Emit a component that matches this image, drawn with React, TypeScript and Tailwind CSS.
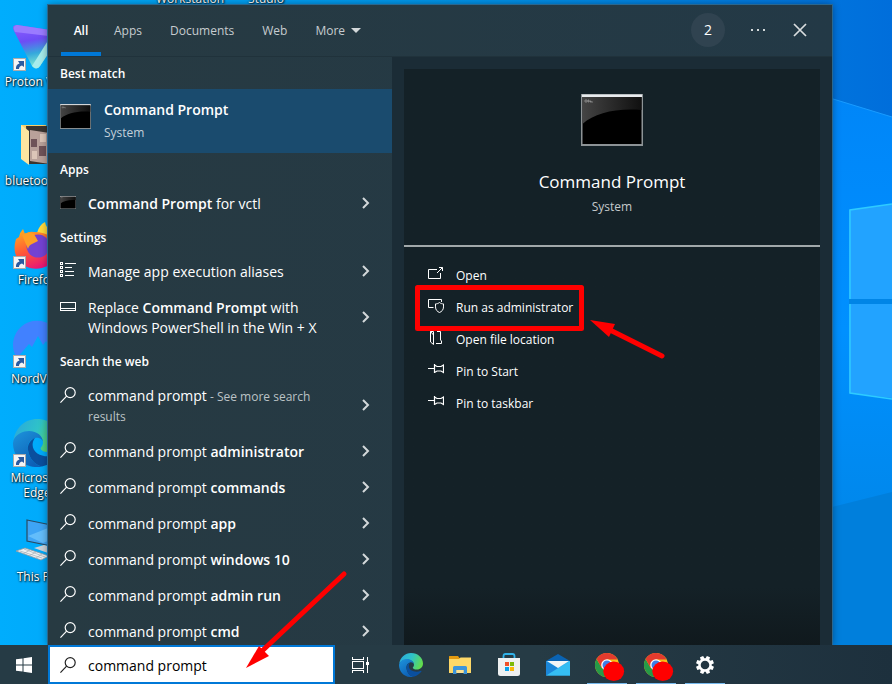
import React from "react";

type Part = { text: string; bold?: boolean };

const textShadow = "[text-shadow:1px_1px_2px_#000,0_0_2px_#000]";

/* ---------- small line icons ---------- */

function SearchIcon() {
  return (
    <svg className="shrink-0" width="16" height="16" viewBox="0 0 16 16" fill="none" stroke="currentColor" strokeWidth="1.2">
      <circle cx="10.2" cy="5.6" r="5" />
      <path d="M6.6 9.2L0.4 15.6" />
    </svg>
  );
}

function ChevronIcon() {
  return (
    <svg width="8" height="12" viewBox="0 0 8 12" fill="none" stroke="#d3d8da" strokeWidth="2">
      <path d="M1 1l5 5-5 5" />
    </svg>
  );
}

function ListIcon() {
  return (
    <svg width="16" height="16" viewBox="0 0 16 16" fill="none" stroke="#fff" shapeRendering="crispEdges">
      <path d="M0.5 0.5h2v2h-2zM0.5 4.5h2v2h-2zM0.5 8.5h2v2h-2zM0.5 12.5h2v2h-2z" />
      <path d="M5 1.5h11M5 5.5h7M5 9.5h9M5 13.5h9" />
    </svg>
  );
}

function TaskbarSettingIcon() {
  return (
    <svg width="16" height="16" viewBox="0 0 16 16" fill="none" stroke="#fff" shapeRendering="crispEdges">
      <path d="M0.5 3.5h15v8h-15zM0.5 9.5h15" />
    </svg>
  );
}

function ConsoleIcon({ width, height }: { width: number; height: number }) {
  return (
    <svg width={width} height={height} viewBox="0 0 62 52" preserveAspectRatio="none">
      <defs>
        <linearGradient id="gloss" x1="0" x2="1">
          <stop offset="0" stopColor="#444" />
          <stop offset="1" stopColor="#101010" />
        </linearGradient>
      </defs>
      <rect width="62" height="52" fill="#8d9396" />
      <rect x="1" y="0.5" width="60" height="2.5" fill="#e8ebee" />
      <rect x="1.5" y="3" width="59" height="47" fill="#000" />
      <path d="M1.500 3h59v13C35 14 14 19 1.500 30z" fill="url(#gloss)" />
      <path d="M4 6h2v2H4zM7 6h1v2H7zM9 7h1v1H9zM10 8h2" stroke="#aaa" strokeWidth="0.6" fill="none" />
    </svg>
  );
}

/* ---------- action icons ---------- */

function OpenIcon() {
  return (
    <svg width="16" height="16" viewBox="0 0 16 16" fill="none" stroke="#fff">
      <path d="M9 3.500H0.500v9h12V7M9 7l5.500-5.500M11 1.500h3.500V5" />
    </svg>
  );
}

function AdminIcon() {
  return (
    <svg width="16" height="16" viewBox="0 0 16 16" fill="none" stroke="#fff">
      <path d="M5.500 9.500h-5v-8h13V4" />
      <path d="M11.500 4.500c-1.200 1-2.600 1.400-4 1.400v3c0 3 1.800 4.700 4 5.600 2.200-.9 4-2.600 4-5.600v-3c-1.400 0-2.800-.4-4-1.400z" />
    </svg>
  );
}

function FolderLocationIcon() {
  return (
    <svg width="16" height="16" viewBox="0 0 16 16" fill="none" stroke="#fff">
      <path d="M2.500 1.500v10.500l3 2.500V5L2.500 1.500zM2.500 1.500h3v10M8 13.500h5.500V11l-1-1V1.500H9" />
    </svg>
  );
}

function PinIcon() {
  return (
    <svg width="16" height="16" viewBox="0 0 16 16" fill="none" stroke="#fff" strokeWidth="1.200">
      <path d="M0 6.500h6M6.500 2v9M6.500 3l2.500 1.500h4l2.500-1.500v7.500L13 9H9l-2.500 1.500" />
    </svg>
  );
}

/* ---------- brand icons ---------- */

function EdgeIcon({ size, id }: { size: number; id: string }) {
  return (
    <svg width={size} height={size} viewBox="0 0 24 24">
      <defs>
        <linearGradient id={id + "a"} x1="0" x2="1" y1="0.2" y2="0.5">
          <stop offset="0" stopColor="#2aa9dc" />
          <stop offset="0.5" stopColor="#2fc3c8" />
          <stop offset="1" stopColor="#63dc4c" />
        </linearGradient>
        <linearGradient id={id + "b"} x1="0" x2="0.6" y1="0" y2="1">
          <stop offset="0" stopColor="#1d94dc" />
          <stop offset="1" stopColor="#0d5fb5" />
        </linearGradient>
      </defs>
      <path d="M0.300 10.500C1.200 4.300 6.200 0 12 0c7 0 12 5 12 10.500 0 3.600-2.700 6-6 6-2.700 0-4.200-1-4.200-1.800 0-.7 1.200-1.200 1.200-3 0-2.800-3-4.900-7-4.900-3.400 0-6 1.400-7.700 3.700z" fill={`url(#${id}a)`} />
      <path d="M0.300 10.500C1.700 7.400 5 6 8 6c4 0 7 2.600 7 5.700 0-1.500-2-2.800-4-2.200-2.600.8-4 3.200-3.500 6C8.200 20 11 23 14.500 23.700 6.500 25.500 0 19.500 0 12z" fill={`url(#${id}b)`} />
      <path d="M11 9.500c-2.400 1-3.900 3.300-3.500 6 .7 4.500 3.500 7.500 7 8.200 3.300-.7 6-2.500 7.900-5.200.4-.6-.1-1-.7-.7-4.900 2.200-11.800.2-11.900-4.800 0-1.300.4-2.500 1.200-3.500z" fill="#0a4f9e" />
    </svg>
  );
}

function ChromeIcon() {
  return (
    <svg className="shrink-0" width="36" height="33" viewBox="-6 -5 36 33">
      <circle cx="12" cy="12" r="12" fill="#fbc116" />
      <path d="M1.600 6A12 12 0 0 0 12 24l5.200-9H6.800z" fill="#269a47" />
      <path d="M1.600 6l5.200 9L12 6.500h10.600A12 12 0 0 0 1.600 6z" fill="#e33b2e" />
      <circle cx="12" cy="12" r="5.800" fill="#fff" />
      <circle cx="12" cy="12" r="4.500" fill="#3d7fe8" />
      <ellipse cx="18.700" cy="18.300" rx="10.400" ry="9.700" fill="#f00" />
    </svg>
  );
}

function ExplorerIcon() {
  return (
    <svg width="22" height="20" viewBox="0 0 22 20">
      <path d="M0 1.500Q0 1 .5 1H9l1.500 2H22v15H0z" fill="#e39a10" />
      <path d="M0 4h10l1.500-1.500H22V18H0z" fill="#fdd868" />
      <path d="M4 19v-6.500Q4 11 5.500 11h11q1.500 0 1.500 1.500V19h-3.500v-4h-7v4z" fill="#3b94db" />
      <path d="M7.500 15h7v3h-7z" fill="#fce193" />
    </svg>
  );
}

function StoreIcon() {
  return (
    <svg width="24" height="24" viewBox="0 0 24 24">
      <path d="M6.500 6V3Q6.500 1 8.500 1h7q2 0 2 2v3" fill="none" stroke="#31b3ea" strokeWidth="1.800" />
      <path d="M1 5h22v15.500q0 2.500-2.500 2.500h-17Q1 23 1 20.500z" fill="#eef0f1" />
      <path d="M8 9h4v4H8z" fill="#ee4f28" />
      <path d="M13 9h4v4h-4z" fill="#7db90a" />
      <path d="M8 14h4v4H8z" fill="#08a1ea" />
      <path d="M13 14h4v4h-4z" fill="#fbb70c" />
    </svg>
  );
}

function MailIcon() {
  return (
    <svg width="24" height="24" viewBox="0 0 24 24">
      <path d="M0 8l12-7 12 7z" fill="#0a63b2" />
      <path d="M0 8h24v14.500H0z" fill="#2da5e8" />
      <path d="M24 8L0 22.500h24z" fill="#35bdf2" />
      <path d="M12 15L0 8v14.500z" fill="#1b86d8" />
      <path d="M1 8h22l-11 7z" fill="#f3f5f6" />
    </svg>
  );
}

function GearIcon() {
  const teeth = [0, 45, 90, 135, 180, 225, 270, 315];
  return (
    <svg width="20" height="20" viewBox="0 0 20 20" fill="#fff">
      {teeth.map((a) => (
        <path key={a} d="M7.900 4.500L8.300 1h3.400l.4 3.500z" transform={`rotate(${a + 22.5} 10 10)`} />
      ))}
      <circle cx="10" cy="10" r="5.500" fill="none" stroke="#fff" strokeWidth="2.400" />
    </svg>
  );
}

function TaskViewIcon() {
  return (
    <svg width="17" height="16" viewBox="0 0 17 16" fill="none" stroke="#fff" shapeRendering="crispEdges">
      <path d="M0.500 0v2.500h11V0M0.500 4.500h11v7h-11zM0.500 16v-2.500h11V16M15.500 0v5M15.500 8v8" />
      <path d="M14 5h3v3h-3z" fill="#fff" stroke="none" />
    </svg>
  );
}

/* ---------- desktop ---------- */

function ProtonIcon() {
  return (
    <svg width="48" height="48" viewBox="0 0 48 48">
      <defs>
        <linearGradient id="pr" x1="0.300" x2="0.500" y1="0" y2="1">
          <stop offset="0" stopColor="#8a5cff" />
          <stop offset="0.350" stopColor="#6d4df5" />
          <stop offset="0.650" stopColor="#35a9dc" />
          <stop offset="1" stopColor="#8ff5d0" />
        </linearGradient>
      </defs>
      <path d="M4 2L44 8q5 1 3 5L27 43q-4 5-8 0L1 8Q-2 2 4 2z" fill="url(#pr)" />
      <path d="M4 2L44 8v6L2 9Q-1 3 4 2z" fill="#9a7bff" />
      <path d="M22 45q3 1 5-2l20-30v-3L36 16 19 43z" fill="#a6ecec" />
    </svg>
  );
}

function PhotoFolderIcon() {
  return (
    <svg width="48" height="48" viewBox="0 0 48 48">
      <path d="M8 3h25v36H16L8 35z" fill="#f5cf6c" />
      <path d="M13 4h30v38H16z" fill="#3b3430" />
      <path d="M17 8l26 4v31L17 39z" fill="#b9a19a" />
      <path d="M18 17h6v8h-6zM26 24h7v10h-7z" fill="#6f5358" />
      <path d="M27 12h6v8h-6zM19 29h5v8h-5z" fill="#dcc5b8" />
      <path d="M8 3l8 6v34l-8-6z" fill="#fde5a0" />
    </svg>
  );
}

function FirefoxIcon() {
  return (
    <svg width="48" height="48" viewBox="0 0 48 48">
      <defs>
        <linearGradient id="ff" x1="0.200" x2="0.600" y1="0" y2="1">
          <stop offset="0" stopColor="#ffab1e" />
          <stop offset="0.500" stopColor="#ff5a36" />
          <stop offset="1" stopColor="#e6127a" />
        </linearGradient>
      </defs>
      <path d="M24 12Q26 4 32 1q1 7 9 12 7 9 3 20z" fill="#ffd93b" />
      <path d="M6 16q1-5 4-8l2 5q4-3 9-2 10 0 18 5l5 12q0 15-15 19-14 3-23-7-7-9-3-22z" fill="url(#ff)" />
      <circle cx="25" cy="25" r="11.500" fill="#7442d2" />
      <path d="M9 14q6-4 12-1l4 7-6 3q-3 1-4 5z" fill="#ff9f25" />
    </svg>
  );
}

function NordIcon() {
  return (
    <svg width="48" height="48" viewBox="0 0 48 48">
      <path d="M4 38A24 24 0 1 1 44 38L33 21l-3 4-5-9-6 11-3-3z" fill="#4181ff" />
    </svg>
  );
}

function ThisPcIcon() {
  return (
    <svg width="48" height="48" viewBox="0 0 48 48">
      <path d="M14 2l34 7v21L14 23z" fill="#3ea4f5" stroke="#294b63" strokeWidth="1.200" />
      <path d="M15 18L40 8l7 2v8L30 25z" fill="#63bdfb" />
      <path d="M21 30l10-3 14 4-10 4z" fill="#ccd3d9" />
      <path d="M3 33l9-3 24 8-8 4z" fill="#eef1f3" stroke="#8f9aa3" strokeWidth="0.800" />
      <path d="M7 33l22 7M11 31l21 8M10 36l7-4M16 38l7-4M23 40l6-4" stroke="#a5afb6" strokeWidth="0.700" />
    </svg>
  );
}

function ShortcutBadge() {
  return (
    <svg className="absolute bottom-0 left-0" width="13" height="13" viewBox="0 0 13 13">
      <rect x="0.500" y="0.500" width="12" height="12" fill="#f5f5f5" stroke="#ababab" />
      <path d="M3 11Q2.500 6.500 6.500 5.500L5 3h6v6L9 7.500Q6 8 6 11z" fill="#2a5aa0" />
    </svg>
  );
}

const shortcuts = [
  { label: "Proton VPN", icon: <ProtonIcon />, linked: true },
  { label: "bluetooth...", icon: <PhotoFolderIcon />, linked: false },
  { label: "Firefox", icon: <FirefoxIcon />, linked: true },
  { label: "NordVPN", icon: <NordIcon />, linked: true },
  { label: "Microsoft Edge", icon: <EdgeIcon size={48} id="desk" />, linked: true },
  { label: "This PC", icon: <ThisPcIcon />, linked: false },
];

function DesktopIcons() {
  return (
    <div className="w-12 shrink-0 pt-[18px]">
      {shortcuts.map((s) => (
        <button key={s.label} className="flex h-[99px] w-[74px] flex-col items-center">
          <span className="relative block h-12 w-12">
            {s.icon}
            {s.linked && <ShortcutBadge />}
          </span>
          <span className={`mt-[3px] flex w-16 justify-center text-center text-xs leading-[15px] text-white ${s.label === "Microsoft Edge" ? "" : "whitespace-nowrap"} ${textShadow}`}>
            {s.label}
          </span>
        </button>
      ))}
    </div>
  );
}

function Wallpaper() {
  return (
    <svg className="absolute inset-0 h-full w-full" viewBox="0 0 892 684" preserveAspectRatio="none">
      <defs>
        <linearGradient id="sky" x1="0" x2="1">
          <stop offset="0" stopColor="#00adfd" />
          <stop offset="0.500" stopColor="#0095ea" />
          <stop offset="1" stopColor="#006edb" />
        </linearGradient>
        <linearGradient id="side" x1="0" x2="0" y1="0" y2="1">
          <stop offset="0" stopColor="#0086f8" />
          <stop offset="0.400" stopColor="#0090ff" />
          <stop offset="0.700" stopColor="#0088ec" />
          <stop offset="1" stopColor="#007edc" />
        </linearGradient>
      </defs>
      <rect width="892" height="684" fill="url(#sky)" />
      <path d="M820 95l72 22v567h-72z" fill="url(#side)" />
      <path d="M820 510l72-18v192h-72z" fill="#007fdc" />
      <path d="M820 95l72 22" stroke="#199cff" />
      <path d="M849 210l43-6v95h-43zM849 304h43v94l-43-5z" fill="#22a3ff" />
      <path d="M849 299h43v5h-43z" fill="#0085e6" />
      <path d="M892 204l-42 6v89M850 304v89l42 6" fill="none" stroke="#2ecbff" strokeWidth="1.500" />
    </svg>
  );
}

/* ---------- search flyout ---------- */

function GroupTitle({ children }: { children: React.ReactNode }) {
  return <h2 className="flex h-8 items-center px-3 pt-px text-xs font-semibold text-white">{children}</h2>;
}

type RowProps = { icon: React.ReactNode; parts: Part[]; note?: string; tall?: boolean };

function ResultRow({ icon, parts, note, tall }: RowProps) {
  return (
    <button className={`flex w-full shrink-0 items-center pl-3 pr-[22px] text-left text-white ${tall ? "h-14" : "h-9"}`}>
      <span className={`flex h-4 w-4 shrink-0 items-center ${tall ? "mb-5" : "mb-[2px]"}`}>{icon}</span>
      <span className="ml-3 w-[248px] pt-[2px] text-sm leading-5">
        {parts.map((p) => (
          <span key={p.text} className={p.bold ? "font-semibold" : ""}>
            {p.text}
          </span>
        ))}
        {note && <span className="text-xs text-[#bcc3c6]">{note}</span>}
      </span>
      <span className="ml-auto">
        <ChevronIcon />
      </span>
    </button>
  );
}

const suggestions = ["administrator", "commands", "app", "windows 10", "admin run", "cmd"];

function Results() {
  return (
    <section className="w-[344px] shrink-0 overflow-hidden">
      <GroupTitle>Best match</GroupTitle>
      <button className="flex h-16 w-full bg-[#1a4b6e] px-3 pt-[10px] text-left">
        <span className="mt-[5px]">
          <ConsoleIcon width={31} height={25} />
        </span>
        <span className="ml-[13px] flex flex-col">
          <span className="text-sm font-semibold leading-[22px] text-white">Command Prompt</span>
          <span className="text-xs leading-6 text-[#c3d0da]">System</span>
        </span>
      </button>
      <GroupTitle>Apps</GroupTitle>
      <ResultRow icon={<ConsoleIcon width={16} height={13} />} parts={[{ text: "Command Prompt", bold: true }, { text: " for vctl" }]} />
      <GroupTitle>Settings</GroupTitle>
      <ResultRow icon={<ListIcon />} parts={[{ text: "Manage app execution aliases" }]} />
      <ResultRow
        icon={<TaskbarSettingIcon />}
        parts={[{ text: "Replace " }, { text: "Command Prompt", bold: true }, { text: " with Windows PowerShell in the Win + X" }]}
        tall
      />
      <GroupTitle>Search the web</GroupTitle>
      <ResultRow icon={<SearchIcon />} parts={[{ text: "command prompt" }]} note=" - See more search results" tall />
      {suggestions.map((s) => (
        <ResultRow key={s} icon={<SearchIcon />} parts={[{ text: "command prompt " }, { text: s, bold: true }]} />
      ))}
    </section>
  );
}

const actions = [
  { label: "Open", icon: <OpenIcon /> },
  { label: "Run as administrator", icon: <AdminIcon /> },
  { label: "Open file location", icon: <FolderLocationIcon /> },
  { label: "Pin to Start", icon: <PinIcon /> },
  { label: "Pin to taskbar", icon: <PinIcon /> },
];

function Details() {
  return (
    <section className="flex flex-1 bg-[#1b2c36] px-3 pt-3">
      <div className="flex-1 bg-gradient-to-b from-[#142127] from-90% to-[#10191d]">
        <div className="flex h-[178px] flex-col items-center border-b-2 border-[#a1a8aa] pt-[25px]">
          <ConsoleIcon width={62} height={52} />
          <h1 className="mt-6 text-[17px] leading-6 text-white">Command Prompt</h1>
          <p className="mt-[3px] text-xs leading-5 text-[#c5c9cb]">System</p>
        </div>
        <div className="pt-[13px]">
          {actions.map((a) => (
            <button key={a.label} className="flex h-8 w-full items-center pl-6 text-left text-xs text-white">
              <span className="mb-1">{a.icon}</span>
              <span className="ml-3">{a.label}</span>
            </button>
          ))}
        </div>
      </div>
    </section>
  );
}

function TabBar() {
  return (
    <header className="flex h-[52px] shrink-0 items-stretch border-b border-[#20323b] text-xs text-[#c6cccf]">
      <nav className="flex pl-[13px]">
        <button className="w-10 border-b-4 border-[#0078d7] pt-1 font-semibold text-white">All</button>
        <button className="ml-[13px]">Apps</button>
        <button className="ml-7">Documents</button>
        <button className="ml-7">Web</button>
        <button className="ml-7 flex items-center gap-[6px]">
          More
          <svg width="10" height="5" viewBox="0 0 10 5" fill="#d3d8da">
            <path d="M0 0h10L5 5z" />
          </svg>
        </button>
      </nav>
      <div className="ml-auto flex items-center pb-px pr-[25px]">
        <button className="flex h-[34px] w-[34px] items-center justify-center rounded-full bg-[#304350] text-sm text-white">2</button>
        <button aria-label="Options" className="ml-[26px]">
          <svg width="15" height="2" viewBox="0 0 15 2" fill="#d3d8da">
            <path d="M0 0h2v2H0zM6 0h2v2H6zM12 0h2v2h-2z" />
          </svg>
        </button>
        <button aria-label="Close" className="ml-[27px]">
          <svg width="14" height="14" viewBox="0 0 14 14" stroke="#d9dddf" strokeWidth="1.700">
            <path d="M1 1l12 12M13 1L1 13" />
          </svg>
        </button>
      </div>
    </header>
  );
}

/* ---------- taskbar ---------- */

const pinned = [
  { label: "Microsoft Edge", icon: <EdgeIcon size={24} id="bar" />, running: false },
  { label: "File Explorer", icon: <ExplorerIcon />, running: false },
  { label: "Microsoft Store", icon: <StoreIcon />, running: false },
  { label: "Mail", icon: <MailIcon />, running: false },
  { label: "Chrome", icon: <ChromeIcon />, running: true },
  { label: "Chrome profile", icon: <ChromeIcon />, running: true },
  { label: "Settings", icon: <GearIcon />, running: true },
];

function Taskbar() {
  return (
    <footer className="relative flex h-[39px] shrink-0 bg-gradient-to-r from-[#263b45] from-60% to-[#1d303d]">
      <button aria-label="Start" className="flex w-12 items-center justify-center">
        <svg width="16" height="16" viewBox="0 0 16 16" fill="#fff">
          <path d="M0 2.300L6.500 1.400v6.100H0zM7.500 1.200L16 0v7.500H7.500zM0 8.500h6.500v6.100L0 13.700zM7.500 8.500H16V16l-8.500-1.200z" />
        </svg>
      </button>
      <label className="flex w-[287px] items-center border-2 border-[#0078d7] bg-white pl-[10px] text-[#222]">
        <SearchIcon />
        <input aria-label="Search" defaultValue="command prompt" className="ml-3 w-full min-w-0 bg-transparent pt-[2px] text-sm text-black outline-none" />
      </label>
      <button aria-label="Task View" className="flex w-[51px] items-center justify-center">
        <TaskViewIcon />
      </button>
      {pinned.map((p) => (
        <button key={p.label} aria-label={p.label} className="relative flex w-[49px] items-center justify-center">
          {p.icon}
          {p.running && <span className="absolute bottom-0 h-px w-10 bg-[#76b9ed]" />}
        </button>
      ))}
    </footer>
  );
}

function Annotations() {
  return (
    <svg className="pointer-events-none absolute left-0 top-0" width="892" height="684" viewBox="0 0 892 684" fill="none" stroke="#f00">
      <rect x="417.500" y="287.500" width="164" height="41" strokeWidth="5" strokeLinejoin="round" />
      <path d="M662 356L606 328" strokeWidth="5" strokeLinecap="round" />
      <path d="M590 320l25 4-6 13z" fill="#f00" stroke="none" />
      <path d="M344 574L262 651" strokeWidth="5" strokeLinecap="round" />
      <path d="M246 668l13-22 10 10z" fill="#f00" stroke="none" />
    </svg>
  );
}

export default function App() {
  return (
    <div className="relative flex h-screen flex-col overflow-hidden font-['Open_Sans','Noto_Sans',sans-serif]">
      <Wallpaper />
      <div className={`absolute left-[156px] top-[-9px] flex gap-6 text-xs leading-4 text-white ${textShadow}`}>
        <span>Workstation</span>
        <span>Studio</span>
      </div>
      <main className="relative flex min-h-0 flex-1 pt-[5px]">
        <DesktopIcons />
        <div className="relative flex min-w-0 flex-1 flex-col overflow-hidden bg-gradient-to-r from-[#273a42] to-[#233946] shadow-[0_0_0_1px_#2a6790,0_0_8px_rgba(0,0,0,0.45)]">
          <TabBar />
          <div className="flex min-h-0 flex-1">
            <Results />
            <Details />
          </div>
        </div>
        <div className="w-[60px] shrink-0" />
      </main>
      <Taskbar />
      <Annotations />
    </div>
  );
}
